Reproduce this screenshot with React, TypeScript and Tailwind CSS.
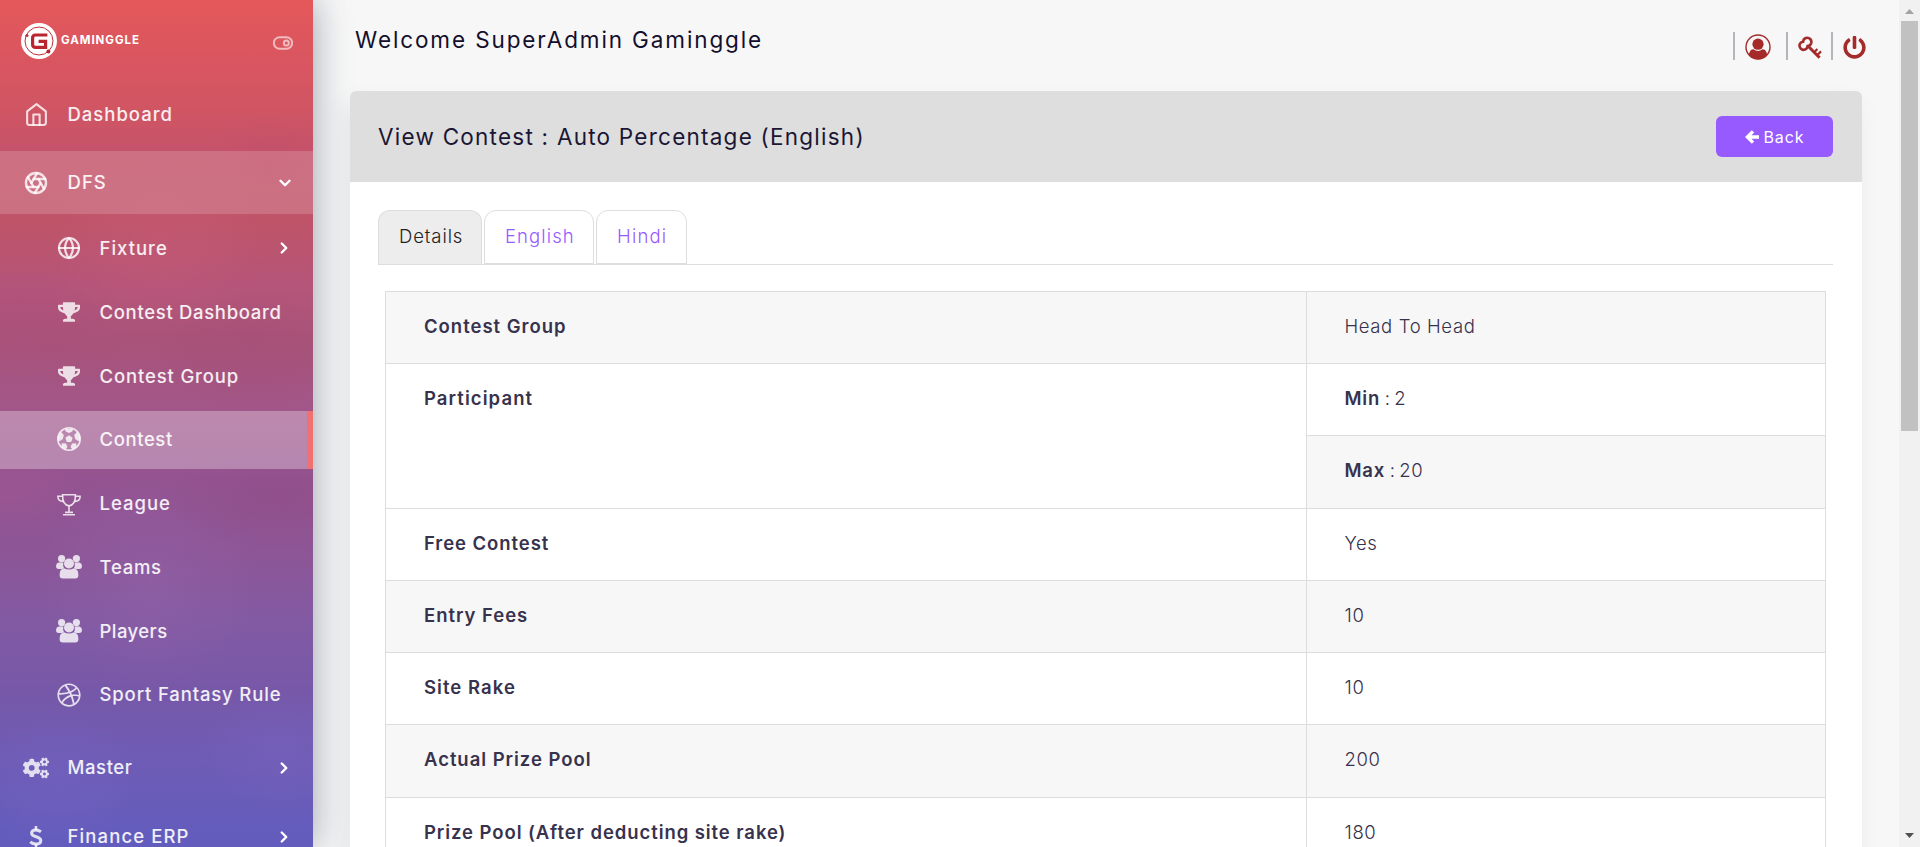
import type { ReactNode } from "react";
import { FiAperture, FiGlobe, FiHome, FiToggleRight, FiChevronDown, FiChevronRight } from "react-icons/fi";
import { FaTrophy, FaCogs, FaDribbble, FaPowerOff } from "react-icons/fa";

function LogoMark() {
  return (
    <svg viewBox="0 0 36 36" className="h-9 w-9 shrink-0">
      <circle cx="18" cy="18" r="18" fill="#fff" />
      <circle cx="18" cy="18" r="14" fill="none" stroke="#c0303a" strokeWidth="1" />
      <circle cx="6" cy="12.4" r="1.5" fill="#c0303a" />
      <circle cx="27.4" cy="28.4" r="2" fill="#b52630" />
      <path d="M26.4 12H14.6Q11.6 12 11.6 15V21.6Q11.6 24.4 14.600 24.4H24.6V18.400H17.6" fill="none" stroke="#b9262f" strokeWidth="3.2" />
    </svg>
  );
}

function GroupIcon() {
  return (
    <svg viewBox="0 0 26 24" className="h-6 w-[26px]" fill="currentColor">
      <circle cx="5.600" cy="3.600" r="3.600" />
      <circle cx="20.400" cy="3.600" r="3.600" />
      <path d="M2.600 7.600H7.400Q6.600 11.600 8 13Q6.800 14 5.400 14H2.600Q0 13.800 0 11Q0 8.200 2.600 7.600Z" />
      <path d="M23.400 7.600H18.600Q19.400 11.600 18 13Q19.200 14 20.600 14H23.400Q26 13.800 26 11Q26 8.200 23.400 7.600Z" />
      <circle cx="13" cy="8.500" r="5" />
      <path d="M8 13.200Q13 15.900 18 13.200Q22.400 13.800 22.400 20Q22.400 23.600 19.200 23.600H6.800Q3.600 23.600 3.600 20Q3.600 13.800 8 13.200Z" />
    </svg>
  );
}

function BallIcon() {
  return (
    <svg viewBox="0 0 24 24" className="h-6 w-6" fill="currentColor">
      <circle cx="12" cy="12" r="11.200" fill="none" stroke="currentColor" strokeWidth="1.600" />
      <path d="M12 8.200L15.600 10.800L14.200 15H9.800L8.400 10.800Z" />
      <path d="M7.600 1.800H16.400L15.200 4.600L12 6L8.800 4.600Z" />
      <path d="M1.200 9L4 5L6.800 8L5.800 12L2.800 14L1 13.600Z" />
      <path d="M22.800 9L20 5L17.200 8L18.200 12L21.200 14L23 13.600Z" />
      <path d="M4.400 20L4.800 16.200L9 16.600L10.400 20L8.600 22.600Z" />
      <path d="M19.600 20L19.200 16.200L15 16.600L13.600 20L15.400 22.600Z" />
    </svg>
  );
}

function CupIcon() {
  return (
    <svg viewBox="0 0 24 24" className="h-6 w-6" fill="none" stroke="currentColor" strokeWidth="1.600">
      <path d="M5.600 2.800H18.400C18.600 9.600 16 13.400 12 13.800C8 13.400 5.400 9.600 5.600 2.800Z" />
      <path d="M5.600 4.200H0.900C0.800 7.600 2.800 9.600 6.400 9.400M18.400 4.200H23.100C23.200 7.600 21.200 9.600 17.600 9.400" />
      <path d="M12 13.800V20.400M8 20.400H16M6 22.800H18" />
    </svg>
  );
}

function DollarIcon() {
  return (
    <svg viewBox="0 0 14 22" className="h-[22px] w-3.5" fill="none" stroke="currentColor" strokeWidth="3">
      <path d="M12 5.800C10 4.400 8.400 4 6.800 4C4.200 4 2.600 5.200 2.600 7.200C2.600 11.600 11.800 9.800 11.800 14.400C11.800 16.800 9.800 18 7 18C4.800 18 2.800 17.200 1.200 15.800" />
      <path d="M7 0V4M7 18V22" strokeWidth="2.600" />
    </svg>
  );
}

function UserIcon() {
  return (
    <svg viewBox="0 0 26 26" className="h-[26px] w-[26px]">
      <circle cx="13" cy="13" r="12" fill="none" stroke="#a52a2a" strokeWidth="1.400" />
      <circle cx="13" cy="10.200" r="5.600" fill="#a52a2a" />
      <path d="M3.800 20.400Q5 15.200 8.400 15.200Q13 18.600 17.600 15.200Q21 15.200 22.200 20.400Q18.400 25.200 13 25.200Q7.600 25.200 3.800 20.400Z" fill="#a52a2a" />
    </svg>
  );
}

function KeyIcon() {
  return (
    <svg viewBox="0 0 24 24" className="h-6 w-6" fill="none" stroke="#a52a2a">
      <path d="M2.600 12.400C0.400 9.600 1.600 6.200 5 5.800C5.400 1.800 9.800 0.600 12.200 3C14.600 5.600 13.200 9.600 9.600 10C9.400 13.600 5 15.200 2.600 12.400Z" strokeWidth="2.600" />
      <path d="M10.500 10.500L21.600 21.800" strokeWidth="3" />
      <path d="M16.200 16.200L19.400 13M19.200 19.200L23 15.400" strokeWidth="2.200" />
    </svg>
  );
}

function NavItem({ icon, label, tracking, sub, row, end }: { icon: ReactNode; label: string; tracking: string; sub?: boolean; row: string; end?: ReactNode }) {
  return (
    <a className={`flex shrink-0 items-center ${row} ${sub ? "pl-[55px]" : "pl-[22px]"}`}>
      <span className="flex w-7 shrink-0 justify-center text-white/80">{icon}</span>
      <span className={`whitespace-nowrap text-[18.5px] font-medium leading-none text-white/90 ${sub ? "ml-[16.5px]" : "ml-[17.5px]"} ${tracking}`}>{label}</span>
      {end}
    </a>
  );
}

const right = <FiChevronRight className="ml-auto mr-5 h-[18px] w-[18px] text-white" strokeWidth={3.2} />;
const down = <FiChevronDown className="ml-auto mr-[19px] h-[18px] w-[18px] text-white" strokeWidth={3.2} />;

function Sidebar() {
  return (
    <aside className="flex w-[313px] shrink-0 flex-col overflow-hidden bg-[radial-gradient(ellipse_60px_50px_at_270px_160px,rgba(190,75,105,0.3),transparent),radial-gradient(ellipse_110px_90px_at_160px_240px,rgba(200,92,120,0.4),transparent),radial-gradient(ellipse_110px_60px_at_20px_320px,rgba(170,78,125,0.4),transparent),radial-gradient(ellipse_90px_60px_at_250px_350px,rgba(160,75,115,0.3),transparent),radial-gradient(ellipse_130px_50px_at_280px_500px,rgba(142,76,132,0.5),transparent),radial-gradient(ellipse_110px_110px_at_150px_580px,rgba(146,98,168,0.5),transparent),radial-gradient(ellipse_70px_40px_at_10px_490px,rgba(160,88,145,0.5),transparent),radial-gradient(ellipse_80px_60px_at_280px_750px,rgba(120,98,190,0.5),transparent),radial-gradient(ellipse_80px_70px_at_60px_780px,rgba(116,98,192,0.5),transparent),linear-gradient(180deg,#e45859_0px,#db565f_50px,#d05563_110px,#c5536a_150px,#bf5468_220px,#b4557a_290px,#a95379_340px,#a25688_405px,#945391_480px,#8c5697_560px,#825aa3_620px,#7758a8_690px,#6e5cb5_760px,#625cbe_847px)]">
      <div className="flex h-[82px] shrink-0 items-center pl-[21px]">
        <LogoMark />
        <span className="ml-1 font-[Inter] text-[11.5px] font-bold leading-none tracking-[0.95px] text-white">GAMINGGLE</span>
        <FiToggleRight className="ml-auto mr-5 mt-1 h-5 w-5 text-white/60" strokeWidth={2.4} />
      </div>
      <NavItem row="h-[64px] mb-[5px]" icon={<FiHome className="h-[25px] w-[25px]" />} label="Dashboard" tracking="tracking-[0.99px]" />
      <NavItem row="h-[63px] mb-[2px] bg-white/17" icon={<FiAperture className="h-6 w-6" strokeWidth={2.4} />} label="DFS" tracking="tracking-[1.06px]" end={down} />
      <NavItem sub row="h-16" icon={<FiGlobe className="h-6 w-6" strokeWidth={2.2} />} label="Fixture" tracking="tracking-[1px]" end={right} />
      <NavItem sub row="h-16" icon={<FaTrophy className="h-5 w-[22px]" />} label="Contest Dashboard" tracking="tracking-[0.68px]" />
      <NavItem sub row="h-16 mb-[3px]" icon={<FaTrophy className="h-5 w-[22px]" />} label="Contest Group" tracking="tracking-[0.86px]" />
      <NavItem sub row="h-[58px] mb-[3px] pb-0.5 border-r-[6px] border-[#f2706f] bg-white/30" icon={<BallIcon />} label="Contest" tracking="tracking-[0.6px]" />
      <NavItem sub row="h-[63px]" icon={<CupIcon />} label="League" tracking="tracking-[0.98px]" />
      <NavItem sub row="h-16" icon={<GroupIcon />} label="Teams" tracking="tracking-[0.75px]" />
      <NavItem sub row="h-16" icon={<GroupIcon />} label="Players" tracking="tracking-[0.43px]" />
      <NavItem sub row="h-[63px] mb-[10px]" icon={<FaDribbble className="h-6 w-6" />} label="Sport Fantasy Rule" tracking="tracking-[0.86px]" />
      <NavItem row="h-[63px] mb-[6px]" icon={<FaCogs className="h-[26px] w-[26px]" />} label="Master" tracking="tracking-[0.6px]" end={right} />
      <NavItem row="h-[63px]" icon={<DollarIcon />} label="Finance ERP" tracking="tracking-[1.11px]" end={right} />
    </aside>
  );
}

type Row = { label: string; tracking: string; values: { key?: string; value: string; shade: boolean; h: string }[]; shade: boolean };

const rows: Row[] = [
  { label: "Contest Group", tracking: "tracking-[0.98px]", shade: true, values: [{ value: "Head To Head", shade: true, h: "h-[72px]" }] },
  { label: "Participant", tracking: "tracking-[1.08px]", shade: false, values: [{ key: "Min", value: "2", shade: false, h: "h-[72px]" }, { key: "Max", value: "20", shade: true, h: "h-[73px]" }] },
  { label: "Free Contest", tracking: "tracking-[0.92px]", shade: false, values: [{ value: "Yes", shade: false, h: "h-[72px]" }] },
  { label: "Entry Fees", tracking: "tracking-[0.96px]", shade: true, values: [{ value: "10", shade: true, h: "h-[72px]" }] },
  { label: "Site Rake", tracking: "tracking-[1.05px]", shade: false, values: [{ value: "10", shade: false, h: "h-[72px]" }] },
  { label: "Actual Prize Pool", tracking: "tracking-[0.96px]", shade: true, values: [{ value: "200", shade: true, h: "h-[73px]" }] },
  { label: "Prize Pool (After deducting site rake)", tracking: "tracking-[0.92px]", shade: false, values: [{ value: "180", shade: false, h: "h-[72px]" }] },
];

function DetailsTable() {
  return (
    <div className="mx-[7px] mt-[26px] border-l border-t border-[#dcdddf] text-[18.5px] leading-[27px] text-[#37324d]">
      {rows.map((r) => (
        <div key={r.label} className="flex">
          <div className={`w-[921px] shrink-0 border-b border-r border-[#dcdddf] pl-[38px] pt-[21px] font-semibold ${r.tracking} ${r.shade ? "bg-[#f7f7f7]" : "bg-white"}`}>{r.label}</div>
          <div className="flex flex-1 flex-col">
            {r.values.map((v) => (
              <div key={v.value} className={`border-b border-r border-[#dcdddf] pl-[37.5px] pt-[21px] font-light tracking-[0.62px] ${v.h} ${v.shade ? "bg-[#f7f7f7]" : "bg-white"}`}>
                {v.key && <b className="font-semibold tracking-[0.8px]">{v.key}</b>}
                {v.key && <span className="tracking-[-0.5px]"> : </span>}
                {v.value}
              </div>
            ))}
          </div>
        </div>
      ))}
    </div>
  );
}

function Tab({ label, look }: { label: string; look: string }) {
  return <div className={`rounded-t-xl border border-[#dcdddf] pl-5 pt-3 text-[18.5px] font-light leading-[27px] ${look}`}>{label}</div>;
}

export default function App() {
  return (
    <div className="flex h-[847px] w-full overflow-hidden bg-[#f7f7f7] font-[Inter,sans-serif]">
      <div className="flex shrink-0 shadow-[0_0_34px_rgba(45,60,85,0.46)]">
        <Sidebar />
      </div>
      <main className="flex min-w-0 flex-1 flex-col px-[37px]">
        <header className="flex h-[91px] shrink-0 items-start justify-between">
          <h1 className="ml-[5px] mt-[24px] whitespace-nowrap text-[22.5px] leading-8 tracking-[1.88px] text-[#130f2c]">Welcome SuperAdmin Gaminggle</h1>
          <div className="mr-[-4px] mt-8 flex items-center">
            <span className="h-7 w-0.5 bg-[#b4b4ba]" />
            <span className="ml-[10px] mt-0.5"><UserIcon /></span>
            <span className="ml-[15px] h-7 w-0.5 bg-[#b4b4ba]" />
            <span className="ml-[10px] mt-[3px]"><KeyIcon /></span>
            <span className="ml-[9px] h-7 w-0.5 bg-[#b4b4ba]" />
            <FaPowerOff className="ml-[10px] mt-0.5 h-[23px] w-[23px] text-[#a52a2a]" />
          </div>
        </header>
        <section className="shrink-0 rounded-t-md bg-white shadow-[-6px_14px_24px_rgba(70,85,110,0.1)]">
          <div className="flex h-[91px] items-center justify-between rounded-t-md bg-[#dedede] pl-7 pr-[29px]">
            <h2 className="whitespace-nowrap text-[22.5px] leading-8 tracking-[1.24px] text-[#1b1634]">View Contest : Auto Percentage (English)</h2>
            <button className="flex h-[41px] w-[117px] items-center justify-center gap-[5px] rounded-md bg-[#975aff] text-base tracking-[0.9px] text-white">
              <svg viewBox="0 0 14 14" className="h-3.5 w-3.5" fill="none" stroke="#fff" strokeWidth="3.400"><path d="M8 1.400L2.400 7L8 12.600M2.600 7H14" /></svg>
              Back
            </button>
          </div>
          <div className="pl-7 pr-[29px] pt-7">
            <div className="flex h-[55px] items-stretch gap-0.5 border-b border-[#dcdddf]">
              <Tab label="Details" look="w-[104px] border-b-0 bg-[#ededed] text-[#222] tracking-[0.9px]" />
              <Tab label="English" look="w-[110px] bg-white text-[#975aff] tracking-[1.1px]" />
              <Tab label="Hindi" look="w-[91px] bg-white text-[#975aff] tracking-[1.2px]" />
            </div>
            <DetailsTable />
          </div>
        </section>
      </main>
      <div className="flex w-[21px] shrink-0 flex-col items-center justify-between bg-[#f1f1f1]">
        <div className="flex flex-col items-center">
          <svg viewBox="0 0 9 5" className="mb-[7px] mt-[9px] h-[5px] w-[9px]"><path d="M0 5L4.500 0L9 5Z" fill="#a3a3a3" /></svg>
          <div className="h-[410px] w-[17px] bg-[#c1c1c1]" />
        </div>
        <svg viewBox="0 0 9 5" className="mb-[9px] h-[5px] w-[9px]"><path d="M0 0L4.500 5L9 0Z" fill="#505050" /></svg>
      </div>
    </div>
  );
}
